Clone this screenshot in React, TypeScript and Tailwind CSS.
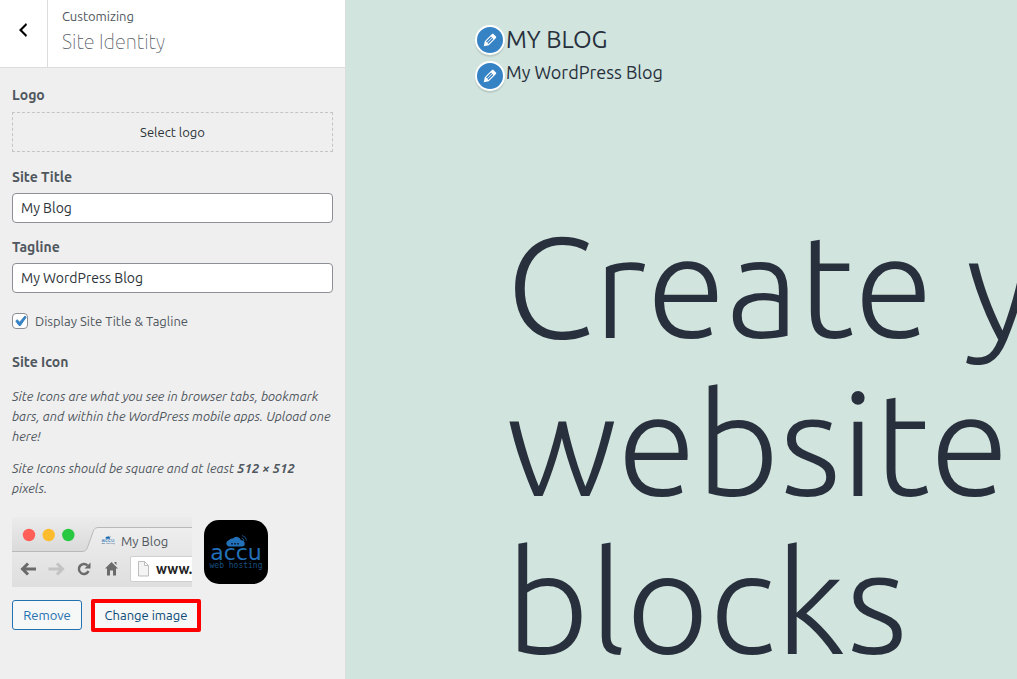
import { useState } from "react";
import type { ReactNode } from "react";

function PencilIcon() {
  return (
    <svg viewBox="0 0 20 20" className="size-[18px] fill-white" aria-hidden="true">
      <path d="M13.89 3.39l2.71 2.72c.46.46.42 1.24.03 1.64l-8.01 8.02-5.56 1.16 1.16-5.58s7.6-7.63 7.99-8.03c.39-.39 1.22-.39 1.68.07zm-2.73 2.79l-5.59 5.61 1.11 1.11 5.54-5.65zm-2.97 8.23l5.58-5.6-1.07-1.08-5.59 5.6z" />
    </svg>
  );
}

function EditButton({ label }: { label: string }) {
  return (
    <button
      type="button"
      aria-label={label}
      className="flex size-[30px] shrink-0 items-center justify-center rounded-full border-2 border-white bg-[#3582c4] shadow-[0_2px_1px_rgba(60,67,74,0.15)]"
    >
      <PencilIcon />
    </button>
  );
}

function LogoArt() {
  return (
    <g fill="#2271b9">
      <path d="M24.500 26.500a3.300 3.300 0 0 1 .3-6.300a4 4 0 0 1 4.200-1.700a4.600 4.600 0 0 1 8 1.800a3.200 3.200 0 0 1 1.500 6.200z" />
      <path d="M27 23.800h9" stroke="#0b2a4a" strokeWidth="1.500" strokeDasharray="2 1" />
      <path d="M37.500 18a3 3 0 0 1 2.500 3M38 15.500a5.500 5.500 0 0 1 4.500 5" fill="none" stroke="#174f82" />
      <text x="32" y="40" textAnchor="middle" fontSize="22" fontFamily="'DejaVu Sans', sans-serif">accu</text>
      <text x="32" y="48" textAnchor="middle" fontSize="8" fontFamily="'DejaVu Sans Mono', monospace" fill="#174f82">web hosting</text>
    </g>
  );
}

function BrowserPreview() {
  return (
    <svg viewBox="0 0 180 70" className="h-[70px] w-[180px] shrink-0" role="img" aria-label="Browser preview">
      <defs>
        <linearGradient id="chrome" x1="0" y1="0" x2="0" y2="1">
          <stop offset="0" stopColor="#ececec" />
          <stop offset="1" stopColor="#d9d9d9" />
        </linearGradient>
        <linearGradient id="bar" x1="0" y1="0" x2="0" y2="1">
          <stop offset="0" stopColor="#eeeeee" />
          <stop offset="1" stopColor="#dedede" />
        </linearGradient>
      </defs>
      <rect width="180" height="36" fill="url(#chrome)" />
      <path d="M0 34.500H70C74 34.500 75 32 76 29L81 15C82 11.500 84 10.500 87 10.500H180V70H0z" fill="url(#bar)" />
      <path d="M0 34.500H70C74 34.500 75 32 76 29L81 15C82 11.500 84 10.500 87 10.500H180" fill="none" stroke="#b9b9b9" />
      <circle cx="17" cy="18" r="6.200" fill="#ff5f57" />
      <circle cx="36.700" cy="18" r="6.200" fill="#fdbc2e" />
      <circle cx="56.300" cy="18" r="6.200" fill="#28c940" />
      <svg x="88" y="15" width="16" height="16" viewBox="0 0 64 64"><LogoArt /></svg>
      <text x="109" y="29" fontSize="13" fill="#50575e">My Blog</text>
      <path d="M24 52H11M16 46.500L10.500 52L16 57.500" fill="none" stroke="#6b6b6b" strokeWidth="3" />
      <path d="M36.500 52H50M45 46.500L50.500 52L45 57.500" fill="none" stroke="#c3c3c3" strokeWidth="3" />
      <path d="M75.500 48.500A5 5 0 1 0 76.500 54" fill="none" stroke="#6b6b6b" strokeWidth="2.500" />
      <path d="M78.500 45.500V51.500H72.500z" fill="#6b6b6b" />
      <path d="M99.500 45L106 51.500H104V58.500H101V53.500H98V58.500H95V51.500H93zM102.500 45h2v3l-2-2z" fill="#6b6b6b" />
      <rect x="118.500" y="39.500" width="64" height="25" rx="1.500" fill="#fff" stroke="#cfcfcf" />
      <path d="M126.500 44.500h6l4 4v10.500h-10z M132.500 44.500v4h4" fill="#f4f4f4" stroke="#bdbdbd" />
      <text x="144" y="57" fontSize="14" fontWeight="700" fill="#222">www.</text>
    </svg>
  );
}

function TextField({ id, label, initial }: { id: string; label: string; initial: string }) {
  return (
    <div className="flex flex-col gap-1">
      <label htmlFor={id} className="text-sm leading-6 font-bold text-[#50575e]">{label}</label>
      <input
        id={id}
        type="text"
        defaultValue={initial}
        className="h-[30px] w-full rounded border border-[#8c8f94] bg-white px-2 text-sm text-[#2c3338]"
      />
    </div>
  );
}

function Heading({ children }: { children: ReactNode }) {
  return <h3 className="text-sm leading-6 font-bold text-[#50575e]">{children}</h3>;
}

function Sidebar() {
  const [shown, setShown] = useState(true);
  return (
    <aside className="flex w-[346px] shrink-0 flex-col border-r border-[#dcdcde] bg-[#efefef] text-[13px] text-[#50575e]">
      <header className="flex h-[68px] border-b border-[#dcdcde] bg-white">
        <button type="button" aria-label="Back" className="flex w-12 items-center justify-center border-r border-[#dcdcde] pr-px pb-2">
          <svg viewBox="0 0 20 20" className="size-5 fill-black" aria-hidden="true">
            <path d="M14 5l-5 5 5 5-1 2-7-7 7-7z" />
          </svg>
        </button>
        <div className="flex flex-col px-[14px] pt-[6px]">
          <span className="leading-5">Customizing</span>
          <h2 className="text-xl leading-8 font-thin">Site Identity</h2>
        </div>
      </header>

      <div className="flex flex-col px-3 pt-[15px]">
        <Heading>Logo</Heading>
        <button type="button" className="mt-[5px] h-10 w-full border border-dashed border-[#c3c4c7] pt-0.5 text-[#2c3338]">
          Select logo
        </button>
        <div className="mt-[13px] flex flex-col gap-3">
          <TextField id="site-title" label="Site Title" initial="My Blog" />
          <TextField id="tagline" label="Tagline" initial="My WordPress Blog" />
        </div>
        <label className="mt-[18px] flex items-center gap-[7px] leading-5">
          <span className="relative flex size-4">
            <input
              type="checkbox"
              checked={shown}
              onChange={(e) => setShown(e.target.checked)}
              className="size-4 appearance-none rounded border border-[#8c8f94] bg-white"
            />
            {shown && (
              <svg viewBox="2 1 16 16" className="pointer-events-none absolute inset-0 size-4 fill-[#3582c4]" aria-hidden="true">
                <path d="M14.830 4.200l1.340.94-5.810 8.380H9.020L5.780 8.980l1.340-1.250 2.570 2.400z" stroke="#3582c4" />
              </svg>
            )}
          </span>
          Display Site Title &amp; Tagline
        </label>
        <div className="mt-[19px]">
          <Heading>Site Icon</Heading>
        </div>
        <div className="mt-3 flex flex-col gap-3 leading-5 italic">
          <p>
            Site Icons are what you see in browser tabs, bookmark bars, and within the WordPress mobile apps. Upload one
            here!
          </p>
          <p>
            Site Icons should be square and at least <strong>512 × 512</strong>
            <br />
            pixels.
          </p>
        </div>
        <div className="mt-[19px] flex items-center gap-3">
          <BrowserPreview />
          <svg viewBox="0 0 64 64" className="size-16" role="img" aria-label="Site icon">
            <rect width="64" height="64" rx="15" fill="#000" />
            <LogoArt />
          </svg>
        </div>
        <div className="mt-3 flex items-start gap-[9px]">
          <button type="button" className="mt-px h-[30px] w-[70px] rounded-[3px] border border-[#2271b1] bg-[#f6f7f7] pt-0.5 text-[#2271b1]">
            Remove
          </button>
          <button type="button" className="h-[33px] w-[110px] rounded-[2px] border-4 border-[#ff0000] bg-[#f6f7f7] text-[#0a4b78]">
            Change image
          </button>
        </div>
      </div>
    </aside>
  );
}

function Preview() {
  return (
    <main className="min-w-0 flex-1 overflow-hidden bg-[#d1e4dd] text-[#28303d]">
      <div className="flex flex-col gap-[6px] pt-[25px] pl-[129px]">
        <div className="flex items-center gap-px">
          <EditButton label="Edit site title" />
          <span className="text-2xl leading-[30px]">MY BLOG</span>
        </div>
        <div className="flex gap-px">
          <EditButton label="Edit tagline" />
          <span className="text-lg leading-[22px]">My WordPress Blog</span>
        </div>
      </div>
      <h1 className="mt-[115px] pl-[160px] text-[144px] leading-[158px] font-light whitespace-nowrap">
        Create your<br />
        website with<br />
        blocks
      </h1>
    </main>
  );
}

export default function App() {
  return (
    <div className="flex h-screen overflow-hidden font-[Ubuntu,'Open_Sans','Noto_Sans',sans-serif]">
      <Sidebar />
      <Preview />
    </div>
  );
}
